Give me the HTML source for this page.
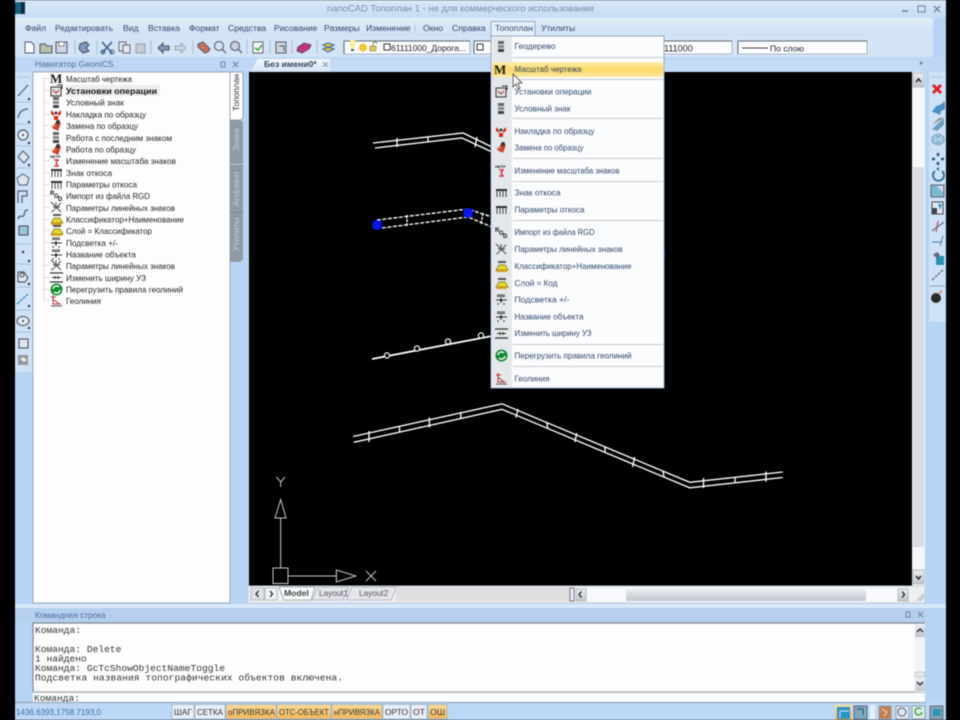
<!DOCTYPE html>
<html><head><meta charset="utf-8"><title>nanoCAD Топоплан</title>
<style>
html,body{margin:0;padding:0;background:#000;width:960px;height:720px;overflow:hidden}
svg{display:block;filter:blur(.45px)}
text{font-family:"Liberation Sans","Noto Sans CJK SC",sans-serif;font-size:8.6px;fill:#2a3550}
.m{fill:#2f4468}
.d{fill:#222}
.mono{font-family:"Liberation Mono",monospace;font-size:9.6px;fill:#333}
.s{font-size:8px;fill:#333}
.n{fill:#4d6d9c}
.cad{fill:none;stroke:#fff;stroke-width:1.35}
</style></head><body>
<svg width="960" height="720" viewBox="0 0 960 720" xmlns="http://www.w3.org/2000/svg">
<defs>
<linearGradient id="gt" x1="0" y1="0" x2="0" y2="1"><stop offset="0" stop-color="#d9e8f8"/><stop offset="1" stop-color="#c5dcf5"/></linearGradient>
<linearGradient id="gm" x1="0" y1="0" x2="0" y2="1"><stop offset="0" stop-color="#e2edf9"/><stop offset="1" stop-color="#cfe1f6"/></linearGradient>
<linearGradient id="gh" x1="0" y1="0" x2="0" y2="1"><stop offset="0" stop-color="#fdf0b0"/><stop offset=".5" stop-color="#fbd765"/><stop offset="1" stop-color="#fce9a0"/></linearGradient>
<linearGradient id="go" x1="0" y1="0" x2="0" y2="1"><stop offset="0" stop-color="#fbdc95"/><stop offset="1" stop-color="#f5b95a"/></linearGradient>
<linearGradient id="gb" x1="0" y1="0" x2="0" y2="1"><stop offset="0" stop-color="#f4f8fc"/><stop offset="1" stop-color="#d5e3f2"/></linearGradient>
<linearGradient id="gs" x1="0" y1="0" x2="0" y2="1"><stop offset="0" stop-color="#eceef2"/><stop offset="1" stop-color="#bfc3cb"/></linearGradient>
<g id="iM"><text x="0" y="11" style="font-family:'Liberation Serif',serif;font-weight:bold;font-size:13px;fill:#1a1a1a">M</text></g>
<g id="iSet"><rect x="1" y="3" width="10" height="9" fill="#e4e4e4" stroke="#333"/><path d="M3 6l3 3 3-3" fill="none" stroke="#a33"/><path d="M7 1h5v4" fill="none" stroke="#333"/></g>
<g id="iSign"><rect x="3" y="1" width="6" height="3" fill="#666"/><rect x="3" y="5" width="6" height="3" fill="#888"/><rect x="3" y="9" width="6" height="3" fill="#444"/></g>
<g id="iRed"><path d="M1 2l3 3v7h4V5l3-3v4l-3 2H4L1 6z" fill="#d02a1c"/><circle cx="6" cy="5" r="1.5" fill="#333"/></g>
<g id="iSwap"><path d="M2 9l4-6 5 1-3 8z" fill="#c9452f"/><circle cx="8" cy="3" r="2" fill="#333"/><path d="M1 7h5" stroke="#e8a070"/></g>
<g id="iScale"><text x="0" y="4" style="font-size:4px;fill:#222;font-weight:bold">НЕТР</text><path d="M4 6h4l-2 3 2 3H4" fill="none" stroke="#d0304a" stroke-width="1.4"/></g>
<g id="iSlope"><rect x="1" y="3" width="11" height="2" fill="#333"/><path d="M2 5v6M5 5v6M8 5v6M11 5v6" stroke="#444"/></g>
<g id="iRgd"><text x="0" y="6" style="font-size:6px;font-weight:bold;fill:#111">R</text><text x="4" y="9" style="font-size:6px;font-weight:bold;fill:#111">G</text><text x="8" y="12" style="font-size:6px;font-weight:bold;fill:#111">D</text></g>
<g id="iStar"><path d="M1 1l10 10M11 2L2 11M6 1v4M3 6h7" stroke="#444" fill="none"/><path d="M1 11l4-3" stroke="#7a94b5"/></g>
<g id="iClass"><path d="M3 1h8v2H3z" fill="#555"/><path d="M1 10l3-5h6l3 5z" fill="#e6d82a" stroke="#6a6a20" stroke-width=".7"/><rect x="1" y="10" width="11" height="2" fill="#d8a020"/></g>
<g id="iHl"><path d="M2 2h8M2 3.5h8" stroke="#444"/><path d="M1 7h11M6 5v5M3 10v2M9 10v2" stroke="#333"/><circle cx="6" cy="7" r="1.3" fill="#222"/></g>
<g id="iW"><path d="M0 2h13M0 11h13" stroke="#333" stroke-width="1.3"/><path d="M2 6.5h9M5 5v3M8 5v3" stroke="#333"/></g>
<g id="iRe"><circle cx="6.5" cy="6.5" r="6" fill="#0e8a2e"/><path d="M3 6a3.5 3.5 0 0 1 6-2M10 7a3.5 3.5 0 0 1-6 2" stroke="#fff" stroke-width="1.4" fill="none"/></g>
<g id="iGeo"><path d="M3 1v9h8M1 3h5M3 5l6 5" stroke="#b23a3a" fill="none"/><path d="M1 12h11" stroke="#555"/></g>
</defs>

<!-- window -->
<rect x="0" y="0" width="960" height="720" fill="#000"/>
<rect x="15" y="0" width="931" height="720" fill="#b7d4f4"/>
<rect x="15" y="0" width="931" height="18" fill="url(#gt)"/>
<rect x="15" y="18" width="918" height="18" fill="url(#gm)"/>
<rect x="15" y="36" width="918" height="21" fill="#d3e4f7"/>
<rect x="15" y="57" width="931" height="15" fill="#bdd7f4"/>

<!-- title -->
<rect x="15" y="2" width="10" height="12" fill="#15607c"/><rect x="21" y="2" width="4" height="12" fill="#0d2f45"/>
<text x="327" y="11.5" style="font-size:9.4px;fill:#7b8ea8" textLength="267" lengthAdjust="spacingAndGlyphs">nanoCAD Топоплан 1 - не для коммерческого использования</text>
<path d="M902 11h6" stroke="#6c7f96" stroke-width="1.5"/>
<rect x="918" y="6" width="7" height="6" fill="none" stroke="#6c7f96"/>
<path d="M934 6l6 6M940 6l-6 6" stroke="#6c7f96" stroke-width="1.3"/>

<!-- menu bar -->
<text class="m" x="25" y="31" >Файл</text>
<text class="m" x="55" y="31" textLength="58" lengthAdjust="spacingAndGlyphs">Редактировать</text>
<text class="m" x="123" y="31">Вид</text>
<text class="m" x="148" y="31">Вставка</text>
<text class="m" x="189" y="31">Формат</text>
<text class="m" x="228" y="31">Средства</text>
<text class="m" x="274" y="31">Рисование</text>
<text class="m" x="324" y="31">Размеры</text>
<text class="m" x="366" y="31">Изменение</text>
<path d="M415 23v10" stroke="#b5c6da"/>
<text class="m" x="423" y="31">Окно</text>
<text class="m" x="452" y="31">Справка</text>
<rect x="491" y="21.5" width="44" height="15" fill="#e6f0fa" stroke="#8fa9c6"/>
<text class="m" x="495" y="31">Топоплан</text>
<text class="m" x="541" y="31">Утилиты</text>

<!-- toolbar icons -->
<path d="M25 42h6l3 3v8h-9z" fill="#fff" stroke="#556"/>
<path d="M40 44h5l2 2h5v7H40z" fill="#b8c0a8" stroke="#556"/>
<rect x="56" y="42" width="11" height="11" fill="#cfd6df" stroke="#556"/><rect x="59" y="42" width="5" height="4" fill="#fff" stroke="#556" stroke-width=".6"/>
<path d="M80 44l6-2 3 3-3 3 3 3-6 2-4-4z" fill="#7f9dbf" stroke="#445"/>
<path d="M102 42l10 11M112 42l-10 11" stroke="#3b5f88" stroke-width="1.6"/><circle cx="103" cy="52" r="2" fill="none" stroke="#3b5f88"/><circle cx="112" cy="52" r="2" fill="none" stroke="#3b5f88"/>
<rect x="119" y="42" width="7" height="9" fill="#e4e8ee" stroke="#667"/><rect x="123" y="45" width="7" height="8" fill="#e4e8ee" stroke="#667"/>
<rect x="136" y="44" width="9" height="9" fill="#c6cbd2" stroke="#99a"/>
<path d="M158 48l5-5v3h6v4h-6v3z" fill="#7d9cbf" stroke="#556"/>
<path d="M186 48l-5-5v3h-6v4h6v3z" fill="#c9d4e2" stroke="#9aa"/>
<path d="M198 44l5-2 7 7-2 3-3 1-7-6z" fill="#c77456" stroke="#556"/>
<circle cx="219" cy="46" r="4.5" fill="none" stroke="#667" stroke-width="1.2"/><path d="M222 49l4 4" stroke="#667" stroke-width="1.5"/>
<circle cx="235" cy="46" r="4.5" fill="#c6d1dd" stroke="#667" stroke-width="1.2"/><path d="M238 49l4 4" stroke="#667" stroke-width="1.5"/>
<rect x="253" y="42" width="10" height="11" fill="#f3f6f3" stroke="#667"/><path d="M255 48l3 2 4-5" stroke="#2c9a3c" fill="none" stroke-width="1.4"/>
<rect x="276" y="42" width="10" height="11" fill="#cfd6df" stroke="#556"/><path d="M279 46h5v5" stroke="#555" fill="none"/>
<path d="M298 47l6-4 7 2-2 4-7 4-5-2z" fill="#c0317f" stroke="#556"/>
<path d="M323 45l5-2 6 2-6 3zM323 49l5-2 6 2-6 3z" fill="#e8c832" stroke="#3262a8"/>
<path d="M75 40v14M97 40v14M151 40v14M193 40v14M247 40v14M270 40v14M292 40v14M317 40v14" stroke="#aabdd3"/>

<!-- combos -->
<rect x="344" y="41" width="126" height="13" fill="#fbfdff" stroke="#aab7c5"/><path d="M344 41h126M344 41v13" stroke="#596470"/>
<circle cx="363" cy="47.5" r="4" fill="#f0c92a"/><path d="M350 44a3 3 0 1 1 5 0l-1 4h-3z" fill="#f6ee9a"/><rect x="351" y="49" width="3" height="2" fill="#555"/>
<rect x="370" y="46" width="6" height="5" fill="#e6c469" stroke="#8a7a3a" stroke-width=".6"/><path d="M373 46v-2a2 2 0 0 1 4 0" fill="none" stroke="#777"/>
<rect x="384" y="44" width="6" height="6" fill="#fff" stroke="#333"/>
<text class="d" x="391" y="51" style="font-size:8.4px" textLength="75" lengthAdjust="spacingAndGlyphs">61111000_Дорога...</text>
<rect x="474" y="41" width="258" height="13" fill="#fbfdff" stroke="#aab7c5"/><path d="M474 41h258M474 41v13" stroke="#596470"/>
<rect x="477" y="44" width="6" height="6" fill="#fff" stroke="#333"/>
<text class="d" x="664" y="51.5" style="font-size:9px">111000</text>
<rect x="738" y="41" width="129" height="13" fill="#fbfdff" stroke="#aab7c5"/><path d="M738 41h129M738 41v13" stroke="#596470"/>
<path d="M742 48h26" stroke="#444"/>
<text class="d" x="770" y="51.5">По слою</text>
<path d="M916 62h7l-3.5 4z" fill="#50688a"/>

<!-- navigator -->
<text class="n" x="35" y="67">Навигатор GeoniCS</text>
<rect x="221" y="62" width="4" height="5" fill="none" stroke="#6e87a6"/><path d="M233 62l5 5M238 62l-5 5" stroke="#6e87a6" stroke-width="1.1"/>

<!-- left vertical toolbar -->
<rect x="15" y="72" width="17" height="300" fill="#cfe1f6"/>
<path d="M18 77h11" stroke="#8fa3bc" stroke-dasharray="1 1"/>
<path d="M18 96l10-11" stroke="#3e6d95" stroke-width="1.3"/>
<path d="M18 118c1-6 5-9 10-9" fill="none" stroke="#4a5d70" stroke-width="1.3"/>
<circle cx="23" cy="135" r="5" fill="#e3eaf2" stroke="#506070" stroke-width="1.2"/><circle cx="23" cy="135" r="1" fill="#333"/>
<path d="M18 157l5-6 6 6-5 6z" fill="#dfe7f0" stroke="#506070" stroke-width="1.1"/>
<path d="M23 174l6 4-2 7h-8l-2-7z" fill="#dde6f0" stroke="#506070"/>
<path d="M18 203v-12h9v5h-5v7" fill="none" stroke="#506070" stroke-width="1.2"/>
<path d="M18 219c2-6 5 0 6-4s1-5 4-5" fill="none" stroke="#3a5266" stroke-width="1.2"/>
<rect x="19" y="226" width="9" height="9" fill="#9cc5d6" stroke="#445"/>
<circle cx="23" cy="252" r="1.2" fill="#334"/>
<path d="M18 272h6l4 6-3 4h-7z" fill="#dfe7ef" stroke="#445"/><circle cx="22" cy="275" r="2" fill="none" stroke="#445"/>
<path d="M17 304l11-10" stroke="#2a93c2" stroke-width="1.4" stroke-dasharray="3 1"/>
<ellipse cx="23" cy="321" rx="6" ry="4.5" fill="#e3eaf2" stroke="#506070" stroke-width="1.2"/><circle cx="23" cy="321" r="1" fill="#333"/>
<rect x="19" y="339" width="9" height="9" fill="#dde6ef" stroke="#445"/>
<rect x="18" y="355" width="10" height="10" fill="#8f979f"/><path d="M20 359l3-2 4 3-3 2z" fill="#eee"/>
<path d="M16 102h15M16 124h15M16 146h15M16 168h15M16 244h15M16 264h15M16 287h15M16 310h15M16 332h15" stroke="#a9bed6"/>
<path d="M28 98h2v2h-2zM28 121h2v2h-2zM28 142h2v2h-2zM28 164h2v2h-2zM28 260h2v2h-2zM28 283h2v2h-2zM28 305h2v2h-2zM28 327h2v2h-2z" fill="#223"/>

<!-- left panel -->
<rect x="33" y="72" width="197" height="531" fill="#fdfdfe" stroke="#9aa7b6"/>
<path d="M44 78v222" stroke="#bbb" stroke-dasharray="1 1"/>
<path d="M44 78.5h6M44 90.5h6M44 102.5h6M44 114.5h6M44 125.5h6M44 137.5h6M44 149.5h6M44 160.5h6M44 172.5h6M44 184.5h6M44 195.5h6M44 207.5h6M44 219.5h6M44 230.5h6M44 242.5h6M44 254.5h6M44 265.5h6M44 277.5h6M44 289.5h6M44 300.5h6" stroke="#bbb" stroke-dasharray="1 1"/>
<rect x="65" y="85" width="95" height="11" fill="#ececec"/>
<use href="#iM" x="50" y="72"/><use href="#iSet" x="50" y="84"/><use href="#iSign" x="50" y="96"/><use href="#iRed" x="50" y="108"/><use href="#iSwap" x="50" y="119"/><use href="#iSign" x="50" y="131"/><use href="#iSwap" x="50" y="143"/><use href="#iScale" x="50" y="154"/><use href="#iSlope" x="50" y="166"/><use href="#iSlope" x="50" y="178"/><use href="#iRgd" x="50" y="189"/><use href="#iStar" x="50" y="201"/><use href="#iClass" x="50" y="213"/><use href="#iClass" x="50" y="224"/><use href="#iHl" x="50" y="236"/><use href="#iHl" x="50" y="248"/><use href="#iStar" x="50" y="259"/><use href="#iW" x="50" y="271"/><use href="#iRe" x="50" y="283"/><use href="#iGeo" x="50" y="294"/>
<text class="d" x="66" y="82" textLength="66" lengthAdjust="spacingAndGlyphs">Масштаб чертежа</text>
<text class="d" x="66" y="94" style="font-weight:bold;fill:#111" textLength="91" lengthAdjust="spacingAndGlyphs">Установки операции</text>
<text class="d" x="66" y="105.5" textLength="58" lengthAdjust="spacingAndGlyphs">Условный знак</text>
<text class="d" x="66" y="117.5" textLength="80" lengthAdjust="spacingAndGlyphs">Накладка по образцу</text>
<text class="d" x="66" y="129" textLength="72" lengthAdjust="spacingAndGlyphs">Замена по образцу</text>
<text class="d" x="66" y="141" textLength="106" lengthAdjust="spacingAndGlyphs">Работа с последним знаком</text>
<text class="d" x="66" y="152.5" textLength="70" lengthAdjust="spacingAndGlyphs">Работа по образцу</text>
<text class="d" x="66" y="164" textLength="110" lengthAdjust="spacingAndGlyphs">Изменение масштаба знаков</text>
<text class="d" x="66" y="176" textLength="46" lengthAdjust="spacingAndGlyphs">Знак откоса</text>
<text class="d" x="66" y="187.5" textLength="71" lengthAdjust="spacingAndGlyphs">Параметры откоса</text>
<text class="d" x="66" y="199" textLength="84" lengthAdjust="spacingAndGlyphs">Импорт из файла RGD</text>
<text class="d" x="66" y="211" textLength="109" lengthAdjust="spacingAndGlyphs">Параметры линейных знаков</text>
<text class="d" x="66" y="222.5" textLength="118" lengthAdjust="spacingAndGlyphs">Классификатор+Наименование</text>
<text class="d" x="66" y="234" textLength="86" lengthAdjust="spacingAndGlyphs">Слой = Классификатор</text>
<text class="d" x="66" y="246" textLength="52" lengthAdjust="spacingAndGlyphs">Подсветка +/-</text>
<text class="d" x="66" y="257.5" textLength="70" lengthAdjust="spacingAndGlyphs">Название объекта</text>
<text class="d" x="66" y="269" textLength="109" lengthAdjust="spacingAndGlyphs">Параметры линейных знаков</text>
<text class="d" x="66" y="281" textLength="80" lengthAdjust="spacingAndGlyphs">Изменить ширину УЗ</text>
<text class="d" x="66" y="292.5" textLength="117" lengthAdjust="spacingAndGlyphs">Перегрузить правила геолиний</text>
<text class="d" x="66" y="304" textLength="35" lengthAdjust="spacingAndGlyphs">Геолиния</text>

<!-- vertical tabs -->
<path d="M230 72h12l1 2v44l-3 2h-10z" fill="#fdfdfe" stroke="#9aa7b6"/>
<path d="M230 120h10l3 2v42h-13z" fill="#8f9aa4"/>
<path d="M230 166h13v46h-13z" fill="#8f9aa4"/>
<path d="M230 213h13v46l-3 3h-10z" fill="#8f9aa4"/>
<path d="M230 165.5h13M230 212.500h13" stroke="#7a858f"/>
<text transform="translate(239,111) rotate(-90)" style="font-size:8.4px;fill:#333">Топоплан</text>
<text transform="translate(239,151) rotate(-90)" style="font-size:8.4px;fill:#c7ced4">Знаки</text>
<text transform="translate(239,206) rotate(-90)" style="font-size:8.4px;fill:#c7ced4">Алфавит</text>
<text transform="translate(239,251) rotate(-90)" style="font-size:8.4px;fill:#c7ced4">Утилиты</text>

<!-- document tab -->
<path d="M250 72l8-13h72v13z" fill="url(#gb)"/>
<path d="M330 60h590v12H330z" fill="#c4dcf6"/>
<text x="264" y="67" style="font-weight:bold;font-size:8.6px;fill:#334766">Без имени0*</text>
<path d="M323 62l5 5M328 62l-5 5" stroke="#8a9bb0" stroke-width="1.2"/>

<!-- canvas -->
<rect x="249" y="72" width="663" height="514" fill="#000"/>
<path class="cad" d="M373 143L463 133L492 147M375 148L462 138L492 152"/>
<path class="cad" d="M397 138v9M428 137v5M477 137l-2 10"/>
<path class="cad" d="M377 220L468 209L492 217M382 228L468 217L492 227" stroke-dasharray="4 1.5"/>
<path class="cad" d="M407 215v12M483 213l-2 11" stroke-dasharray="3 1"/>
<rect x="372.500" y="220.500" width="9" height="9" rx="2.500" fill="#0b14f4"/>
<rect x="463.500" y="208.500" width="9" height="9" rx="2.500" fill="#0b14f4"/>
<rect x="662" y="250" width="3" height="8" fill="#0b14c8"/>
<path class="cad" style="stroke-width:1.9" d="M372 359L492 336"/>
<g fill="#000" stroke="#fff" stroke-width="1.2"><circle cx="387" cy="355.500" r="2.600"/><circle cx="417" cy="348.500" r="2.600"/><circle cx="448" cy="341.500" r="2.600"/><circle cx="481" cy="335.500" r="2.600"/></g>
<path class="cad" d="M353 436.500L502 403.800L689.700 482.300L782.700 472M353.700 442.300L502 409.300L689.700 487.800L782.700 477.500"/>
<path class="cad" d="M369 431v11M399.500 427v5M429.400 417.500v10M460.800 412.400v6M518 409l-2 8.500M546.800 423l1 5M576.800 433l-2 9M605 447v6M634.600 457l-2 10M663 471.600l1 5M703.500 478v10M735 477v6M766 471.600v10"/>
<g fill="none" stroke="#c8c8c8" stroke-width="1">
<path d="M280.700 568V518M275 518L280.700 499.500L286 518z"/>
<rect x="273" y="568" width="15" height="15.500"/>
<path d="M288 576H336.400M336.400 570L355.700 576L336.400 582z"/>
<path d="M276.500 477L280.700 482L285 477M280.700 482v5M366 571l10 10M376 571l-10 10"/>
</g>

<!-- vertical scrollbar -->
<rect x="912" y="72" width="13" height="514" fill="#f4f7fb"/>
<rect x="913" y="167" width="11" height="380" fill="#d9dde1"/>
<rect x="913" y="73" width="11" height="14" fill="url(#gs)" stroke="#bbb"/>
<path d="M916 82l2.500-3 2.500 3" fill="none" stroke="#223" stroke-width="1.4"/>
<rect x="913" y="570" width="11" height="14" fill="url(#gs)" stroke="#bbb"/>
<path d="M916 576l2.500 3 2.500-3" fill="none" stroke="#223" stroke-width="1.4"/>

<!-- right toolbar -->
<rect x="929" y="72" width="17" height="250" fill="#cfe1f6"/>
<path d="M931 77h12" stroke="#8fa3bc" stroke-dasharray="1 1"/>
<path d="M933 85l8 8M941 85l-8 8" stroke="#df1f2a" stroke-width="3"/>
<path d="M932 112l4-6 4-1 5-4v8l-4 2-1 4-4-2z" fill="#4a8fc4"/>
<path d="M932 129l12-11v7l-7 6z" fill="#6f9dbf"/><path d="M932 125l7-7h5z" fill="#8d939a"/>
<path d="M932 137l5-3v3h2v-3l5 3v5l-5 3v-3h-2v3l-5-3z" fill="#a5cbe2" stroke="#5a87aa" stroke-width=".7"/>
<path d="M938 153v3M938 162v3M932 159h3M941 159h3" stroke="#205a7c" stroke-width="2.500"/>
<path d="M942 171a5.500 5.500 0 1 1-7 0" fill="none" stroke="#2b6f99" stroke-width="1.800"/><path d="M936 169l3-2v4z" fill="#2b6f99"/>
<rect x="931" y="185" width="13" height="12" fill="#7fb8d4" stroke="#566"/><path d="M937 186h6v6" fill="#dde"/>
<rect x="932" y="202" width="11" height="12" fill="#e3e9ef" stroke="#445"/><rect x="932" y="208" width="5" height="6" fill="#445"/><path d="M938 204h4l-2 6z" fill="#2a96cf"/>
<path d="M932 231l12-9" stroke="#3c5a75"/><path d="M938 221l-2 11" stroke="#c8323f"/>
<path d="M932 242h10M943 236l-3 10" stroke="#4a7fa8"/>
<rect x="936" y="256" width="8" height="9" fill="#2a8fb3"/><path d="M933 255l4-3 3 3-3 3z" fill="#667"/>
<path d="M932 280l11-10" stroke="#667" stroke-dasharray="3 1" stroke-width="1.300"/>
<path d="M930 286h15" stroke="#8da2ba"/>
<circle cx="936" cy="298" r="5" fill="#2b2b2b"/><path d="M939 293l3-2" stroke="#d88a3a" stroke-width="1.500"/>

<!-- model tabs / h scrollbar -->
<rect x="248" y="586" width="677" height="17" fill="#eeeff1" stroke="#c4cfdc"/>
<rect x="251" y="588" width="13" height="12" fill="#dfe2e7" stroke="#bbb"/><path d="M258.500 591l-2.500 3 2.500 3" fill="none" stroke="#223" stroke-width="1.300"/>
<rect x="265" y="588" width="12" height="12" fill="#f1f3f6" stroke="#bbb"/><path d="M270 591l2.500 3-2.500 3" fill="none" stroke="#223" stroke-width="1.300"/>
<path d="M279 587l5 13h27l4-13z" fill="#fff" stroke="#9aa"/>
<text x="284" y="596" style="font-weight:bold;font-size:8.6px;fill:#344">Model</text>
<path d="M312 600l6-13h31l-6 13zM346 600l6-13h45l-6 13z" fill="#e4e6ea" stroke="#aab" stroke-width=".8"/>
<text x="319" y="596" style="font-size:8.2px;fill:#556">Layout1</text>
<text x="359" y="596" style="font-size:8.2px;fill:#556">Layout2</text>
<path d="M396 587H570v14H396z" fill="#e0dde0"/>
<rect x="570" y="588" width="4" height="13" fill="#eef" stroke="#777"/>
<rect x="576" y="589" width="10" height="12" fill="url(#gs)" stroke="#bbb"/><path d="M581.500 591.500l-2.500 3 2.500 3" fill="none" stroke="#223" stroke-width="1.300"/>
<rect x="587" y="588" width="316" height="14" fill="#f7f9fc"/>
<rect x="626" y="589" width="240" height="12" fill="url(#gs)" rx="1"/>
<rect x="898" y="589" width="10" height="12" fill="url(#gs)" stroke="#bbb"/><path d="M902 591.500l2.500 3-2.500 3" fill="none" stroke="#223" stroke-width="1.300"/>
<path d="M917 601l7-7M920 601l4-4" stroke="#aaa"/>

<!-- command panel -->
<rect x="15" y="604" width="931" height="4" fill="#d8e9fa"/>
<rect x="15" y="608" width="911" height="14" fill="#b6cfee"/>
<text class="n" x="35" y="618" style="font-size:8.300px">Командная строка</text>
<rect x="906" y="612" width="4" height="5" fill="none" stroke="#6e87a6"/><path d="M918 612l5 5M923 612l-5 5" stroke="#6e87a6" stroke-width="1.100"/>
<rect x="33" y="623" width="892" height="69" fill="#fdfdfe"/>
<path d="M33 692V623H925" fill="none" stroke="#7d868f" stroke-width="1.200"/>
<path d="M33 692H925" stroke="#b5b5ad" stroke-width="1.400"/>
<rect x="915" y="624" width="10" height="68" fill="#f2f4f7"/>
<rect x="915" y="624" width="10" height="13" fill="url(#gs)"/><path d="M917 632l3-3 3 3" fill="none" stroke="#223" stroke-width="1.300"/>
<rect x="915" y="672" width="10" height="5" fill="#e2e5e9" stroke="#bbb" stroke-width=".6"/>
<rect x="915" y="678" width="10" height="13" fill="url(#gs)"/><path d="M917 682l3 3 3-3" fill="none" stroke="#223" stroke-width="1.300"/>
<text class="mono" x="35" y="633">Команда:</text>
<text class="mono" x="35" y="652">Команда: Delete</text>
<text class="mono" x="35" y="661.500">1 найдено</text>
<text class="mono" x="35" y="671">Команда: GcTcShowObjectNameToggle</text>
<text class="mono" x="35" y="680.500" textLength="308">Подсветка названия топографических объектов включена.</text>
<rect x="33" y="693" width="892" height="9" fill="#fafcfe"/>
<text class="mono" x="34" y="701">Команда:</text>

<!-- status bar -->
<rect x="15" y="702" width="931" height="18" fill="#bdd8f6"/>
<path d="M15 702.500H926" stroke="#8d9cab"/>
<text x="16" y="715" style="font-size:8.400px;fill:#3a6da8" textLength="85" lengthAdjust="spacingAndGlyphs">1436.6393,1758.7193,0</text>
<g stroke="#9fb1c4" stroke-width=".8">
<rect x="172" y="704.500" width="22" height="14.500" fill="#e8eff8"/>
<rect x="195" y="704.500" width="30" height="14.500" fill="#e8eff8"/>
<rect x="226" y="704.500" width="50" height="14.500" fill="url(#go)"/>
<rect x="277" y="704.500" width="54" height="14.500" fill="url(#go)"/>
<rect x="332" y="704.500" width="50" height="14.500" fill="url(#go)"/>
<rect x="383" y="704.500" width="27" height="14.500" fill="#e8eff8"/>
<rect x="411" y="704.500" width="16" height="14.500" fill="#e8eff8"/>
<rect x="428" y="704.500" width="19" height="14.500" fill="url(#go)"/>
</g>
<text class="s" x="174" y="715" textLength="18" lengthAdjust="spacingAndGlyphs">ШАГ</text>
<text class="s" x="197" y="715" textLength="26" lengthAdjust="spacingAndGlyphs">СЕТКА</text>
<text class="s" x="228" y="715" textLength="47" lengthAdjust="spacingAndGlyphs">оПРИВЯЗКА</text>
<text class="s" x="279" y="715" textLength="50" lengthAdjust="spacingAndGlyphs">ОТС-ОБЪЕКТ</text>
<text class="s" x="334" y="715" textLength="46" lengthAdjust="spacingAndGlyphs">нПРИВЯЗКА</text>
<text class="s" x="385" y="715" textLength="23" lengthAdjust="spacingAndGlyphs">ОРТО</text>
<text class="s" x="413" y="715" textLength="12" lengthAdjust="spacingAndGlyphs">ОТ</text>
<text class="s" x="430" y="715" textLength="15" lengthAdjust="spacingAndGlyphs">ОШ</text>
<rect x="835" y="705" width="17" height="15" fill="url(#go)"/><rect x="837" y="707" width="13" height="12" fill="#2a93c8"/><path d="M840 718v-7h9" fill="none" stroke="#cfe8f5"/>
<rect x="854" y="706" width="13" height="13" fill="#7fa9c4" stroke="#54677a"/><path d="M857 709h6v6" fill="none" stroke="#2b4d66"/>
<rect x="870" y="705" width="5" height="14" fill="#e6eff9"/>
<rect x="879" y="706" width="12" height="13" fill="#c97d4e" stroke="#8d9aa8"/><path d="M882 709l5 3-3 4" fill="none" stroke="#e6ddd0"/>
<rect x="896" y="706" width="13" height="13" fill="#dfe8f1" stroke="#8d9aa8"/><circle cx="902" cy="712" r="4" fill="none" stroke="#556"/>
<rect x="912" y="706" width="13" height="13" fill="#dfeee3" stroke="#8d9aa8"/><path d="M922 712a3.500 3.500 0 1 1-1-3" fill="none" stroke="#2c9a4e" stroke-width="1.300"/>
<rect x="930" y="706" width="13" height="13" fill="#8fa4b0" stroke="#5d7080"/><rect x="933" y="709" width="8" height="7" fill="#2a96c0"/>

<!-- dropdown menu -->
<rect x="491" y="36" width="173" height="352" fill="#fbfcfe" stroke="#94a8c0"/>
<rect x="492" y="37" width="20" height="350" fill="#e5e8ea"/>
<rect x="492" y="62" width="171" height="15" fill="url(#gh)"/>
<path d="M513 57.500h150M513 79.500h150M513 118.500h150M513 158.500h150M513 181.500h150M513 220.500h150M513 344.500h150M513 366.500h150" stroke="#c5c8cc"/>
<use href="#iSign" x="495" y="40"/><use href="#iM" x="494" y="63"/><use href="#iSet" x="495" y="85"/><use href="#iSign" x="495" y="102"/><use href="#iRed" x="495" y="125"/><use href="#iSwap" x="495" y="141"/><use href="#iScale" x="495" y="164"/><use href="#iSlope" x="495" y="186"/><use href="#iSlope" x="495" y="203"/><use href="#iRgd" x="495" y="226"/><use href="#iStar" x="495" y="243"/><use href="#iClass" x="495" y="260"/><use href="#iClass" x="495" y="277"/><use href="#iHl" x="495" y="293"/><use href="#iHl" x="495" y="310"/><use href="#iW" x="495" y="327"/><use href="#iRe" x="495" y="349"/><use href="#iGeo" x="495" y="372"/>
<text class="m" x="514.500" y="49" textLength="41" lengthAdjust="spacingAndGlyphs">Геодерево</text>
<text class="m" x="514.500" y="72" textLength="67" lengthAdjust="spacingAndGlyphs">Масштаб чертежа</text>
<text class="m" x="514.500" y="94.500" textLength="77" lengthAdjust="spacingAndGlyphs">Установки операции</text>
<text class="m" x="514.500" y="111.500" textLength="56" lengthAdjust="spacingAndGlyphs">Условный знак</text>
<text class="m" x="514.500" y="134" textLength="80" lengthAdjust="spacingAndGlyphs">Накладка по образцу</text>
<text class="m" x="514.500" y="150.500" textLength="69" lengthAdjust="spacingAndGlyphs">Замена по образцу</text>
<text class="m" x="514.500" y="173.500" textLength="105" lengthAdjust="spacingAndGlyphs">Изменение масштаба знаков</text>
<text class="m" x="514.500" y="195.500" textLength="46" lengthAdjust="spacingAndGlyphs">Знак откоса</text>
<text class="m" x="514.500" y="212.500" textLength="70" lengthAdjust="spacingAndGlyphs">Параметры откоса</text>
<text class="m" x="514.500" y="235" textLength="80" lengthAdjust="spacingAndGlyphs">Импорт из файла RGD</text>
<text class="m" x="514.500" y="252" textLength="108" lengthAdjust="spacingAndGlyphs">Параметры линейных знаков</text>
<text class="m" x="514.500" y="269" textLength="117" lengthAdjust="spacingAndGlyphs">Классификатор+Наименование</text>
<text class="m" x="514.500" y="286" textLength="43" lengthAdjust="spacingAndGlyphs">Слой = Код</text>
<text class="m" x="514.500" y="302.500" textLength="55" lengthAdjust="spacingAndGlyphs">Подсветка +/-</text>
<text class="m" x="514.500" y="319.500" textLength="69" lengthAdjust="spacingAndGlyphs">Название объекта</text>
<text class="m" x="514.500" y="336" textLength="77" lengthAdjust="spacingAndGlyphs">Изменить ширину УЗ</text>
<text class="m" x="514.500" y="358.500" textLength="117" lengthAdjust="spacingAndGlyphs">Перегрузить правила геолиний</text>
<text class="m" x="514.500" y="381.500" textLength="35" lengthAdjust="spacingAndGlyphs">Геолиния</text>
<!-- cursor -->
<path d="M513 74v13l3-3 2 5 2-1-2-5h4z" fill="#f4f4f4" stroke="#444" stroke-width=".8"/>
</svg>
</body></html>
